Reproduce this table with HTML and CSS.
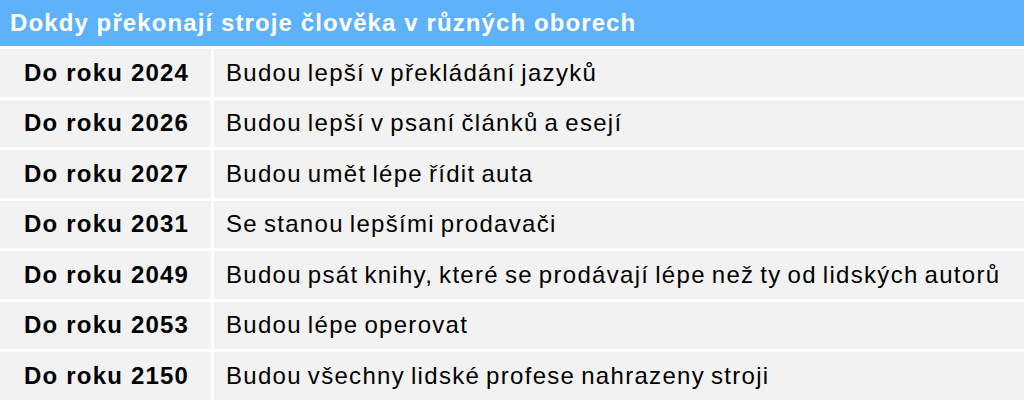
FILE: index.html
```html
<!DOCTYPE html>
<html lang="cs">
<head>
<meta charset="utf-8">
<link rel="stylesheet" href="styles.css">
</head>
<body>
<div class="table">
  <div class="title">Dokdy překonají stroje člověka v různých oborech</div>
  <div class="row"><div class="year">Do roku 2024</div><div class="desc">Budou lepší v překládání jazyků</div></div>
  <div class="row"><div class="year">Do roku 2026</div><div class="desc">Budou lepší v psaní článků a esejí</div></div>
  <div class="row"><div class="year">Do roku 2027</div><div class="desc">Budou umět lépe řídit auta</div></div>
  <div class="row"><div class="year">Do roku 2031</div><div class="desc">Se stanou lepšími prodavači</div></div>
  <div class="row"><div class="year">Do roku 2049</div><div class="desc">Budou psát knihy, které se prodávají lépe než ty od lidských autorů</div></div>
  <div class="row"><div class="year">Do roku 2053</div><div class="desc">Budou lépe operovat</div></div>
  <div class="row"><div class="year">Do roku 2150</div><div class="desc">Budou všechny lidské profese nahrazeny stroji</div></div>
</div>
</body>
</html>
```
FILE: styles.css
```css
html, body {
  margin: 0;
  padding: 0;
  background: #ffffff;
}
.table {
  width: 1024px;
  height: 400px;
  overflow: hidden;
  font-family: "Liberation Sans", Arial, sans-serif;
  display: flex;
  flex-direction: column;
}
.title {
  height: 46px;
  background: #5eb1fb;
  color: #ffffff;
  font-weight: bold;
  font-size: 24px;
  letter-spacing: 1.1px;
  padding-left: 10px;
  display: flex;
  align-items: center;
  box-sizing: border-box;
}
.row {
  display: grid;
  grid-template-columns: 211px 1fr;
  column-gap: 3px;
  margin-top: 3px;
  height: 47.5px;
}
.year, .desc {
  background: #f2f2f2;
  color: #000000;
  font-size: 24px;
  display: flex;
  align-items: center;
  white-space: nowrap;
}
.year {
  font-weight: bold;
  padding-left: 24px;
  letter-spacing: 1.2px;
}
.desc {
  padding-left: 12px;
  letter-spacing: 1.3px;
  word-spacing: -2px;
}
```
